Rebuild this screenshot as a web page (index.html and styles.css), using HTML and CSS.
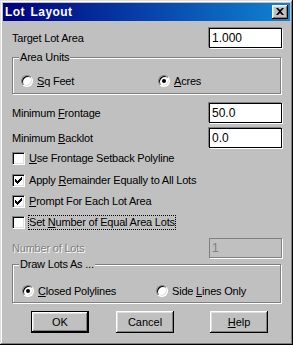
FILE: index.html
```html
<!DOCTYPE html>
<html lang="en">
<head>
    <meta charset="UTF-8">
    <title>Lot Layout</title>
    <link rel="stylesheet" href="styles.css">
</head>
<body>

<div class="window">
    <div class="titlebar">
        <span class="title">Lot Layout</span>
        <button type="button" class="close">
            <svg width="8" height="7" viewBox="0 0 8 7">
                <path d="M0 0h2l2 2 2-2h2l-3 3.5 3 3.5h-2l-2-2-2 2h-2l3-3.5z" fill="#000"/>
            </svg>
        </button>
    </div>

    <div class="content">
        <div class="field-row">
            <span>Target Lot Area</span>
            <div class="edit">1.000</div>
        </div>

        <fieldset class="group">
            <legend>Area Units</legend>
            <div class="radio-row units">
                <span class="radio-item"><span class="radio"></span><span><u>S</u>q Feet</span></span>
                <span class="radio-item"><span class="radio checked"></span><span><u>A</u>cres</span></span>
            </div>
        </fieldset>

        <div class="field-row row-frontage">
            <span>Minimum <u>F</u>rontage</span>
            <div class="edit">50.0</div>
        </div>
        <div class="field-row row-backlot">
            <span>Minimum <u>B</u>acklot</span>
            <div class="edit">0.0</div>
        </div>

        <div class="check-row first">
            <span class="checkbox"></span>
            <span><u>U</u>se Frontage Setback Polyline</span>
        </div>
        <div class="check-row">
            <span class="checkbox checked"><svg width="7" height="7" viewBox="0 0 7 7"><path d="M0 2h1v3h-1zM1 3h1v3h-1zM2 4h1v3h-1zM3 3h1v3h-1zM4 2h1v3h-1zM5 1h1v3h-1zM6 0h1v3h-1z" fill="#000"/></svg></span>
            <span>Apply <u>R</u>emainder Equally to All Lots</span>
        </div>
        <div class="check-row tight">
            <span class="checkbox checked"><svg width="7" height="7" viewBox="0 0 7 7"><path d="M0 2h1v3h-1zM1 3h1v3h-1zM2 4h1v3h-1zM3 3h1v3h-1zM4 2h1v3h-1zM5 1h1v3h-1zM6 0h1v3h-1z" fill="#000"/></svg></span>
            <span><u>P</u>rompt For Each Lot Area</span>
        </div>
        <div class="check-row tight">
            <span class="checkbox"></span>
            <span class="focus">Set <u>N</u>umber of Equal Area Lots</span>
        </div>

        <div class="field-row row-lots">
            <span class="disabled">Number of Lots</span>
            <div class="edit edit-disabled">1</div>
        </div>

        <fieldset class="group group-draw">
            <legend>Draw Lots As ...</legend>
            <div class="radio-row draw">
                <span class="radio-item"><span class="radio checked"></span><span><u>C</u>losed Polylines</span></span>
                <span class="radio-item"><span class="radio"></span><span>Side <u>L</u>ines Only</span></span>
            </div>
        </fieldset>

        <div class="buttons">
            <button type="button" class="btn btn-default">OK</button>
            <button type="button" class="btn btn-cancel">Cancel</button>
            <button type="button" class="btn btn-help"><u>H</u>elp</button>
        </div>
    </div>
</div>

</body>
</html>
```

FILE: styles.css
```css
body {
    margin: 0;
    font-family: "Liberation Sans", Arial, sans-serif;
    font-size: 11px;
    letter-spacing: -0.2px;
    color: #000;
}
.window {
    width: 293px;
    height: 345px;
    box-sizing: border-box;
    padding: 3px;
    background-color: #c0c0c0;
    box-shadow: inset -1px -1px #000, inset 1px 1px #dfdfdf, inset -2px -2px #808080, inset 2px 2px #fff;
}
.titlebar {
    height: 18px;
    display: flex;
    align-items: center;
    justify-content: space-between;
    padding: 0 2px;
    background: linear-gradient(90deg, #000080, #1084d0);
}
.title {
    color: white;
    font-weight: bold;
    font-size: 12px;
    letter-spacing: 0.4px;
    word-spacing: 2px;
}
.close {
    width: 16px;
    height: 14px;
    padding: 0;
    border: none;
    display: flex;
    align-items: center;
    justify-content: center;
    background-color: #c0c0c0;
    box-shadow: inset -1px -1px #000, inset 1px 1px #fff, inset -2px -2px #808080, inset 2px 2px #dfdfdf;
}
.close svg {
    margin-left: -1px;
    margin-top: -1px;
}
.content {
    padding: 7px 8px 0 9px;
}
.field-row {
    display: flex;
    align-items: center;
    justify-content: space-between;
    height: 20px;
}
.edit {
    width: 73px;
    height: 20px;
    box-sizing: border-box;
    padding: 0 2px;
    line-height: 18px;
    font-size: 12px;
    letter-spacing: 0;
    background-color: white;
    border: 1px solid #000;
    box-shadow: -1px -1px #808080, 1px 1px #fff;
}
.edit-disabled {
    background-color: #c0c0c0;
    color: #808080;
    border-color: #808080;
    box-shadow: 1px 1px #fff;
}
.disabled {
    color: #808080;
    text-shadow: 1px 1px #fff;
}
.group {
    margin: 3px 1px 0 0;
    padding: 0;
    min-width: 0;
    border: 1px solid #808080;
    box-shadow: inset 1px 1px #fff, 1px 1px #fff;
}
.group legend {
    margin-left: 6px;
    padding: 0 1px;
    line-height: 13px;
    background-color: #c0c0c0;
}
.radio-row {
    display: flex;
    align-items: center;
    height: 14px;
}
.radio-row.units {
    padding: 10px 0 5px 8px;
}
.radio-row.units .radio-item:first-child {
    width: 137px;
}
.radio-row.draw {
    padding: 13px 0 4px 9px;
}
.radio-row.draw .radio-item:first-child {
    width: 134px;
}
.radio-item {
    display: flex;
    align-items: center;
    gap: 4px;
}
.radio {
    width: 12px;
    height: 12px;
    box-sizing: border-box;
    border-radius: 50%;
    background-color: white;
    border: 1px solid;
    border-color: #808080 #fff #fff #808080;
    box-shadow: inset 1px 1px #000, inset -1px -1px #dfdfdf;
    display: flex;
    align-items: center;
    justify-content: center;
}
.radio.checked::after {
    content: "";
    width: 4px;
    height: 4px;
    border-radius: 50%;
    background-color: #000;
}
.row-frontage {
    margin-top: 9px;
}
.row-backlot {
    margin-top: 5px;
}
.check-row {
    display: flex;
    align-items: center;
    gap: 4px;
    height: 13px;
    line-height: 13px;
    margin-top: 9px;
}
.check-row.first {
    margin-top: 4px;
}
.check-row.tight {
    margin-top: 8px;
}
.checkbox {
    width: 13px;
    height: 13px;
    box-sizing: border-box;
    background-color: white;
    border: 1px solid;
    border-color: #808080 #fff #fff #808080;
    box-shadow: inset 1px 1px #000, inset -1px -1px #dfdfdf;
    display: flex;
    align-items: center;
    justify-content: center;
}
.focus {
    outline: 1px dotted #000;
}
.row-lots {
    margin-top: 9px;
}
.group-draw {
    margin-top: 0;
}
.buttons {
    display: flex;
    margin-top: 8px;
    padding-left: 19px;
}
.btn {
    width: 58px;
    height: 22px;
    padding: 0;
    border: none;
    font-family: "Liberation Sans", Arial, sans-serif;
    font-size: 11px;
    color: #000;
    background-color: #c0c0c0;
    box-shadow: inset -1px -1px #000, inset 1px 1px #fff, inset -2px -2px #808080, inset 2px 2px #dfdfdf;
}
.btn-default {
    border: 1px solid #000;
}
.btn-cancel {
    margin-left: 27px;
}
.btn-help {
    margin-left: 36px;
}
```
